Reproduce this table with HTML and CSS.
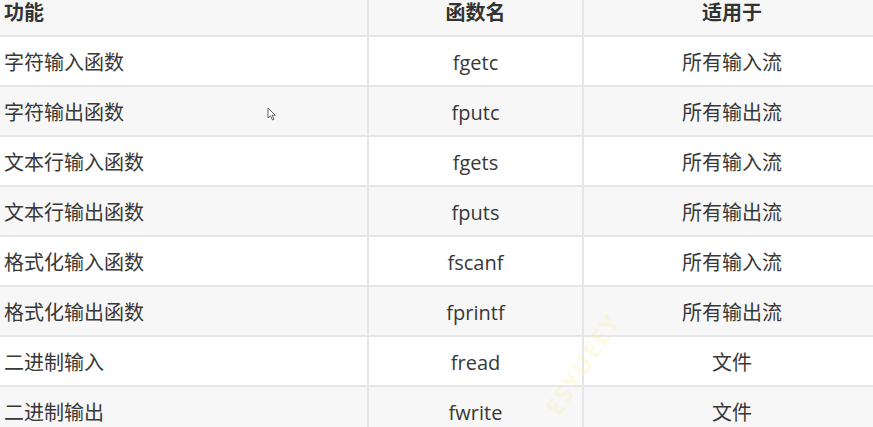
FILE: index.html
```html
<!DOCTYPE html>
<html lang="zh">
<head>
<meta charset="utf-8">
<link rel="stylesheet" href="styles.css">
</head>
<body>
<div class="page">
  <table class="tbl">
    <colgroup>
      <col class="c1"><col class="c2"><col class="c3">
    </colgroup>
    <thead>
      <tr><th class="left">功能</th><th>函数名</th><th>适用于</th></tr>
    </thead>
    <tbody>
      <tr><td class="left">字符输入函数</td><td>fgetc</td><td>所有输入流</td></tr>
      <tr><td class="left">字符输出函数</td><td>fputc</td><td>所有输出流</td></tr>
      <tr><td class="left">文本行输入函数</td><td>fgets</td><td>所有输入流</td></tr>
      <tr><td class="left">文本行输出函数</td><td>fputs</td><td>所有输出流</td></tr>
      <tr><td class="left">格式化输入函数</td><td>fscanf</td><td>所有输入流</td></tr>
      <tr><td class="left">格式化输出函数</td><td>fprintf</td><td>所有输出流</td></tr>
      <tr><td class="left">二进制输入</td><td>fread</td><td>文件</td></tr>
      <tr><td class="left">二进制输出</td><td>fwrite</td><td>文件</td></tr>
    </tbody>
  </table>
  <div class="watermark">ESYUEEY</div>
  <svg class="cursor" width="10" height="14" viewBox="0 0 10 14">
    <path d="M1 1 L1 11 L3.5 8.8 L5.5 13 L7 12.3 L5.1 8.2 L8.3 8.2 Z" fill="#fff" stroke="#555" stroke-width="0.9" stroke-linejoin="round"/>
  </svg>
</div>
</body>
</html>
```

FILE: styles.css
```css
html, body {
  margin: 0;
  padding: 0;
  background: #ffffff;
}
.page {
  position: relative;
  width: 873px;
  height: 427px;
  overflow: hidden;
}
.tbl {
  width: 880px;
  border-collapse: collapse;
  table-layout: fixed;
  font-family: "Open Sans", "Noto Sans CJK SC", sans-serif;
  font-size: 20px;
  color: #383838;
}
.c1 { width: 368px; }
.c2 { width: 215px; }
.c3 { width: 297px; }
.tbl th, .tbl td {
  height: 50px;
  padding: 3px 0 0 0;
  text-align: center;
  vertical-align: middle;
  border-bottom: 2px solid #e6e6e6;
  border-left: 2px solid #e6e6e6;
  box-sizing: border-box;
  line-height: 1;
}
.tbl th {
  height: 36px;
  padding: 0 0 10px 0;
  font-weight: 700;
  background: #f7f7f7;
  color: #333;
}
.tbl th.left, .tbl td.left {
  text-align: left;
  padding-left: 4px;
  border-left: none;
}
.tbl tbody tr:nth-child(odd) { background: #ffffff; }
.tbl tbody tr:nth-child(even) { background: #f7f7f7; }
.watermark {
  position: absolute;
  left: 525px;
  top: 352px;
  transform: rotate(-57deg);
  font-family: "Open Sans", sans-serif;
  font-weight: 700;
  font-size: 24px;
  letter-spacing: 2px;
  line-height: 1;
  color: rgba(250, 235, 150, 0.25);
  pointer-events: none;
}
.cursor {
  position: absolute;
  left: 267px;
  top: 107px;
}
```
